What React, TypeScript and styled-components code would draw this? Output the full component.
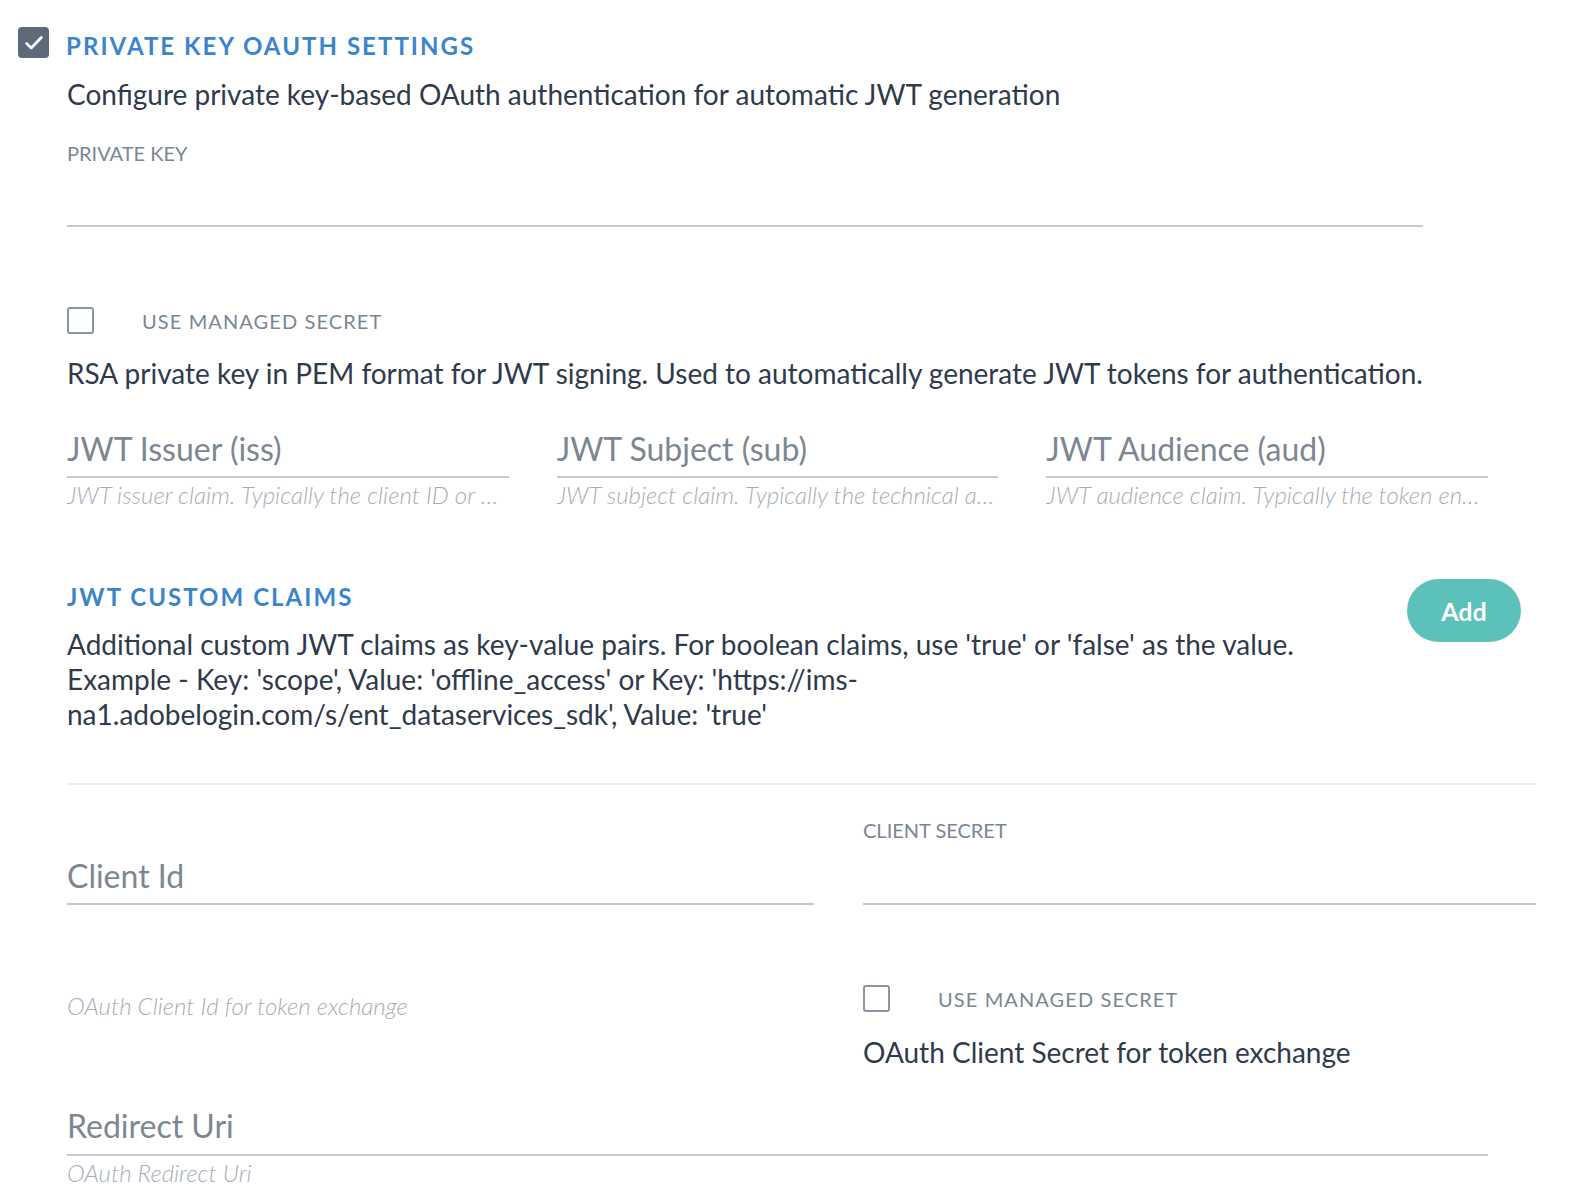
import styled, { createGlobalStyle } from 'styled-components';

const GlobalStyle = createGlobalStyle`
  body {
    margin: 0;
    background: #fff;
    font-family: Lato, "Open Sans", sans-serif;
    color: #2f3a4c;
  }
  * { box-sizing: border-box; }
`;

const Page = styled.div`
  width: 1584px;
  padding: 27px 0 30px 18px;
`;

const Header = styled.div`
  display: flex;
  align-items: flex-start;
  gap: 17px;
`;

const CheckBox = styled.span<{ $checked?: boolean }>`
  display: inline-flex;
  align-items: center;
  justify-content: center;
  flex: none;
  width: ${(p) => (p.$checked ? '31px' : '27px')};
  height: ${(p) => (p.$checked ? '31px' : '27px')};
  border-radius: ${(p) => (p.$checked ? '4px' : '3px')};
  background: ${(p) => (p.$checked ? '#5e6979' : '#fff')};
  border: ${(p) => (p.$checked ? 'none' : '2px solid #8c96a3')};
`;

const SectionTitle = styled.h2<{ $top?: number }>`
  margin: ${(p) => p.$top ?? 0}px 0 0;
  font-size: 24px;
  font-weight: 700;
  letter-spacing: 2.05px;
  line-height: 30px;
  color: #3c84cc;
  text-transform: uppercase;
`;

const Body = styled.div`
  margin-left: 49px;
  display: flex;
  flex-direction: column;
`;

const Paragraph = styled.p<{ $top: number }>`
  margin: ${(p) => p.$top}px 0 0;
  font-size: 28px;
  line-height: 35px;
  color: #2f3a4c;
`;

const Field = styled.div<{ $top: number; $width?: string }>`
  margin-top: ${(p) => p.$top}px;
  width: ${(p) => p.$width ?? '100%'};
  display: flex;
  flex-direction: column;
  min-width: 0;
`;

const SmallLabel = styled.label`
  font-size: 20px;
  line-height: 24px;
  color: #7b8695;
  text-transform: uppercase;
`;

const TextInput = styled.input<{ $h: number; $pt?: number }>`
  display: block;
  width: 100%;
  height: ${(p) => p.$h}px;
  padding: ${(p) => p.$pt ?? 0}px 0 0;
  border: none;
  border-bottom: 2px solid #c3cad3;
  outline: none;
  background: transparent;
  font-family: Lato, "Open Sans", sans-serif;
  font-size: 32px;
  color: #2f3a4c;

  &::placeholder {
    color: #7c8794;
  }
`;

const Helper = styled.div<{ $top: number }>`
  margin-top: ${(p) => p.$top}px;
  font-size: 24px;
  font-weight: 300;
  line-height: 28px;
  font-style: italic;
  color: #a6aeb9;
  white-space: nowrap;
  overflow: hidden;
  text-overflow: ellipsis;
`;

const SecretRow = styled.div<{ $top: number }>`
  margin-top: ${(p) => p.$top}px;
  display: flex;
  align-items: center;
  gap: 48px;
  height: 27px;
`;

const SecretLabel = styled.span`
  font-size: 20px;
  letter-spacing: 1.1px;
  color: #7b8695;
  text-transform: uppercase;
`;

const ClaimGrid = styled.div`
  margin-top: 29px;
  width: 1421px;
  display: grid;
  grid-template-columns: repeat(3, 1fr);
  column-gap: 48px;
`;

const ClaimsRow = styled.div`
  margin-top: 70px;
  width: 1454px;
  display: flex;
  align-items: flex-start;
  gap: 24px;
`;

const ClaimsText = styled.div`
  flex: 1;
  padding-top: 3px;
`;

const AddButton = styled.button`
  flex: none;
  width: 114px;
  height: 63px;
  border: none;
  border-radius: 32px;
  background: #5cc1b8;
  color: #fff;
  font-family: Lato, "Open Sans", sans-serif;
  font-size: 25px;
  font-weight: 700;
  cursor: pointer;
`;

const Divider = styled.hr`
  margin: 51px 0 0;
  width: 1469px;
  height: 2px;
  border: none;
  background: #ebebeb;
`;

const ClientGrid = styled.div`
  width: 1469px;
  display: grid;
  grid-template-columns: 747px 673px;
  column-gap: 49px;
  align-items: start;
`;

const LabelSlot = styled.div`
  height: 24px;
  display: flex;
  align-items: center;
`;

const Check = () => (
  <svg width="22" height="22" viewBox="0 0 24 24" fill="none">
    <path d="M4 12.5l5 5L20 6" stroke="#fff" strokeWidth="3" strokeLinecap="round" strokeLinejoin="round" />
  </svg>
);

const claimFields = [
  { placeholder: 'JWT Issuer (iss)', help: 'JWT issuer claim. Typically the client ID or organization ID' },
  { placeholder: 'JWT Subject (sub)', help: 'JWT subject claim. Typically the technical account ID' },
  { placeholder: 'JWT Audience (aud)', help: 'JWT audience claim. Typically the token endpoint URL' },
];

export default function App() {
  return (
    <Page>
      <GlobalStyle />
      <Header>
        <CheckBox $checked>
          <Check />
        </CheckBox>
        <SectionTitle $top={4}>Private Key OAuth Settings</SectionTitle>
      </Header>

      <Body>
        <Paragraph $top={16}>
          Configure private key-based OAuth authentication for automatic JWT generation
        </Paragraph>

        <Field $top={29} $width="1356px">
          <SmallLabel>Private Key</SmallLabel>
          <TextInput $h={62} />
        </Field>

        <SecretRow $top={80}>
          <CheckBox />
          <SecretLabel>Use Managed Secret</SecretLabel>
        </SecretRow>

        <Paragraph $top={22}>
          RSA private key in PEM format for JWT signing. Used to automatically generate JWT tokens for authentication.
        </Paragraph>

        <ClaimGrid>
          {claimFields.map((f) => (
            <Field key={f.placeholder} $top={0}>
              <TextInput $h={58} placeholder={f.placeholder} />
              <Helper $top={3}>{f.help}</Helper>
            </Field>
          ))}
        </ClaimGrid>

        <ClaimsRow>
          <ClaimsText>
            <SectionTitle>JWT Custom Claims</SectionTitle>
            <Paragraph $top={15}>
              Additional custom JWT claims as key-value pairs. For boolean claims, use 'true' or 'false' as the value.
              Example - Key: 'scope', Value: 'offline_access' or Key: 'https://ims-na1.adobelogin.com/s/ent_dataservices_sdk', Value: 'true'
            </Paragraph>
          </ClaimsText>
          <AddButton>Add</AddButton>
        </ClaimsRow>

        <Divider />

        <ClientGrid>
          <Field $top={33}>
            <LabelSlot />
            <TextInput $h={63} $pt={6} placeholder="Client Id" />
            <Helper $top={87}>OAuth Client Id for token exchange</Helper>
          </Field>
          <Field $top={33}>
            <LabelSlot>
              <SmallLabel>Client Secret</SmallLabel>
            </LabelSlot>
            <TextInput $h={63} />
            <SecretRow $top={80}>
              <CheckBox />
              <SecretLabel>Use Managed Secret</SecretLabel>
            </SecretRow>
            <Paragraph $top={23}>OAuth Client Secret for token exchange</Paragraph>
          </Field>
        </ClientGrid>

        <Field $top={27} $width="1421px">
          <TextInput $h={59} placeholder="Redirect Uri" />
          <Helper $top={3}>OAuth Redirect Uri</Helper>
        </Field>
      </Body>
    </Page>
  );
}
